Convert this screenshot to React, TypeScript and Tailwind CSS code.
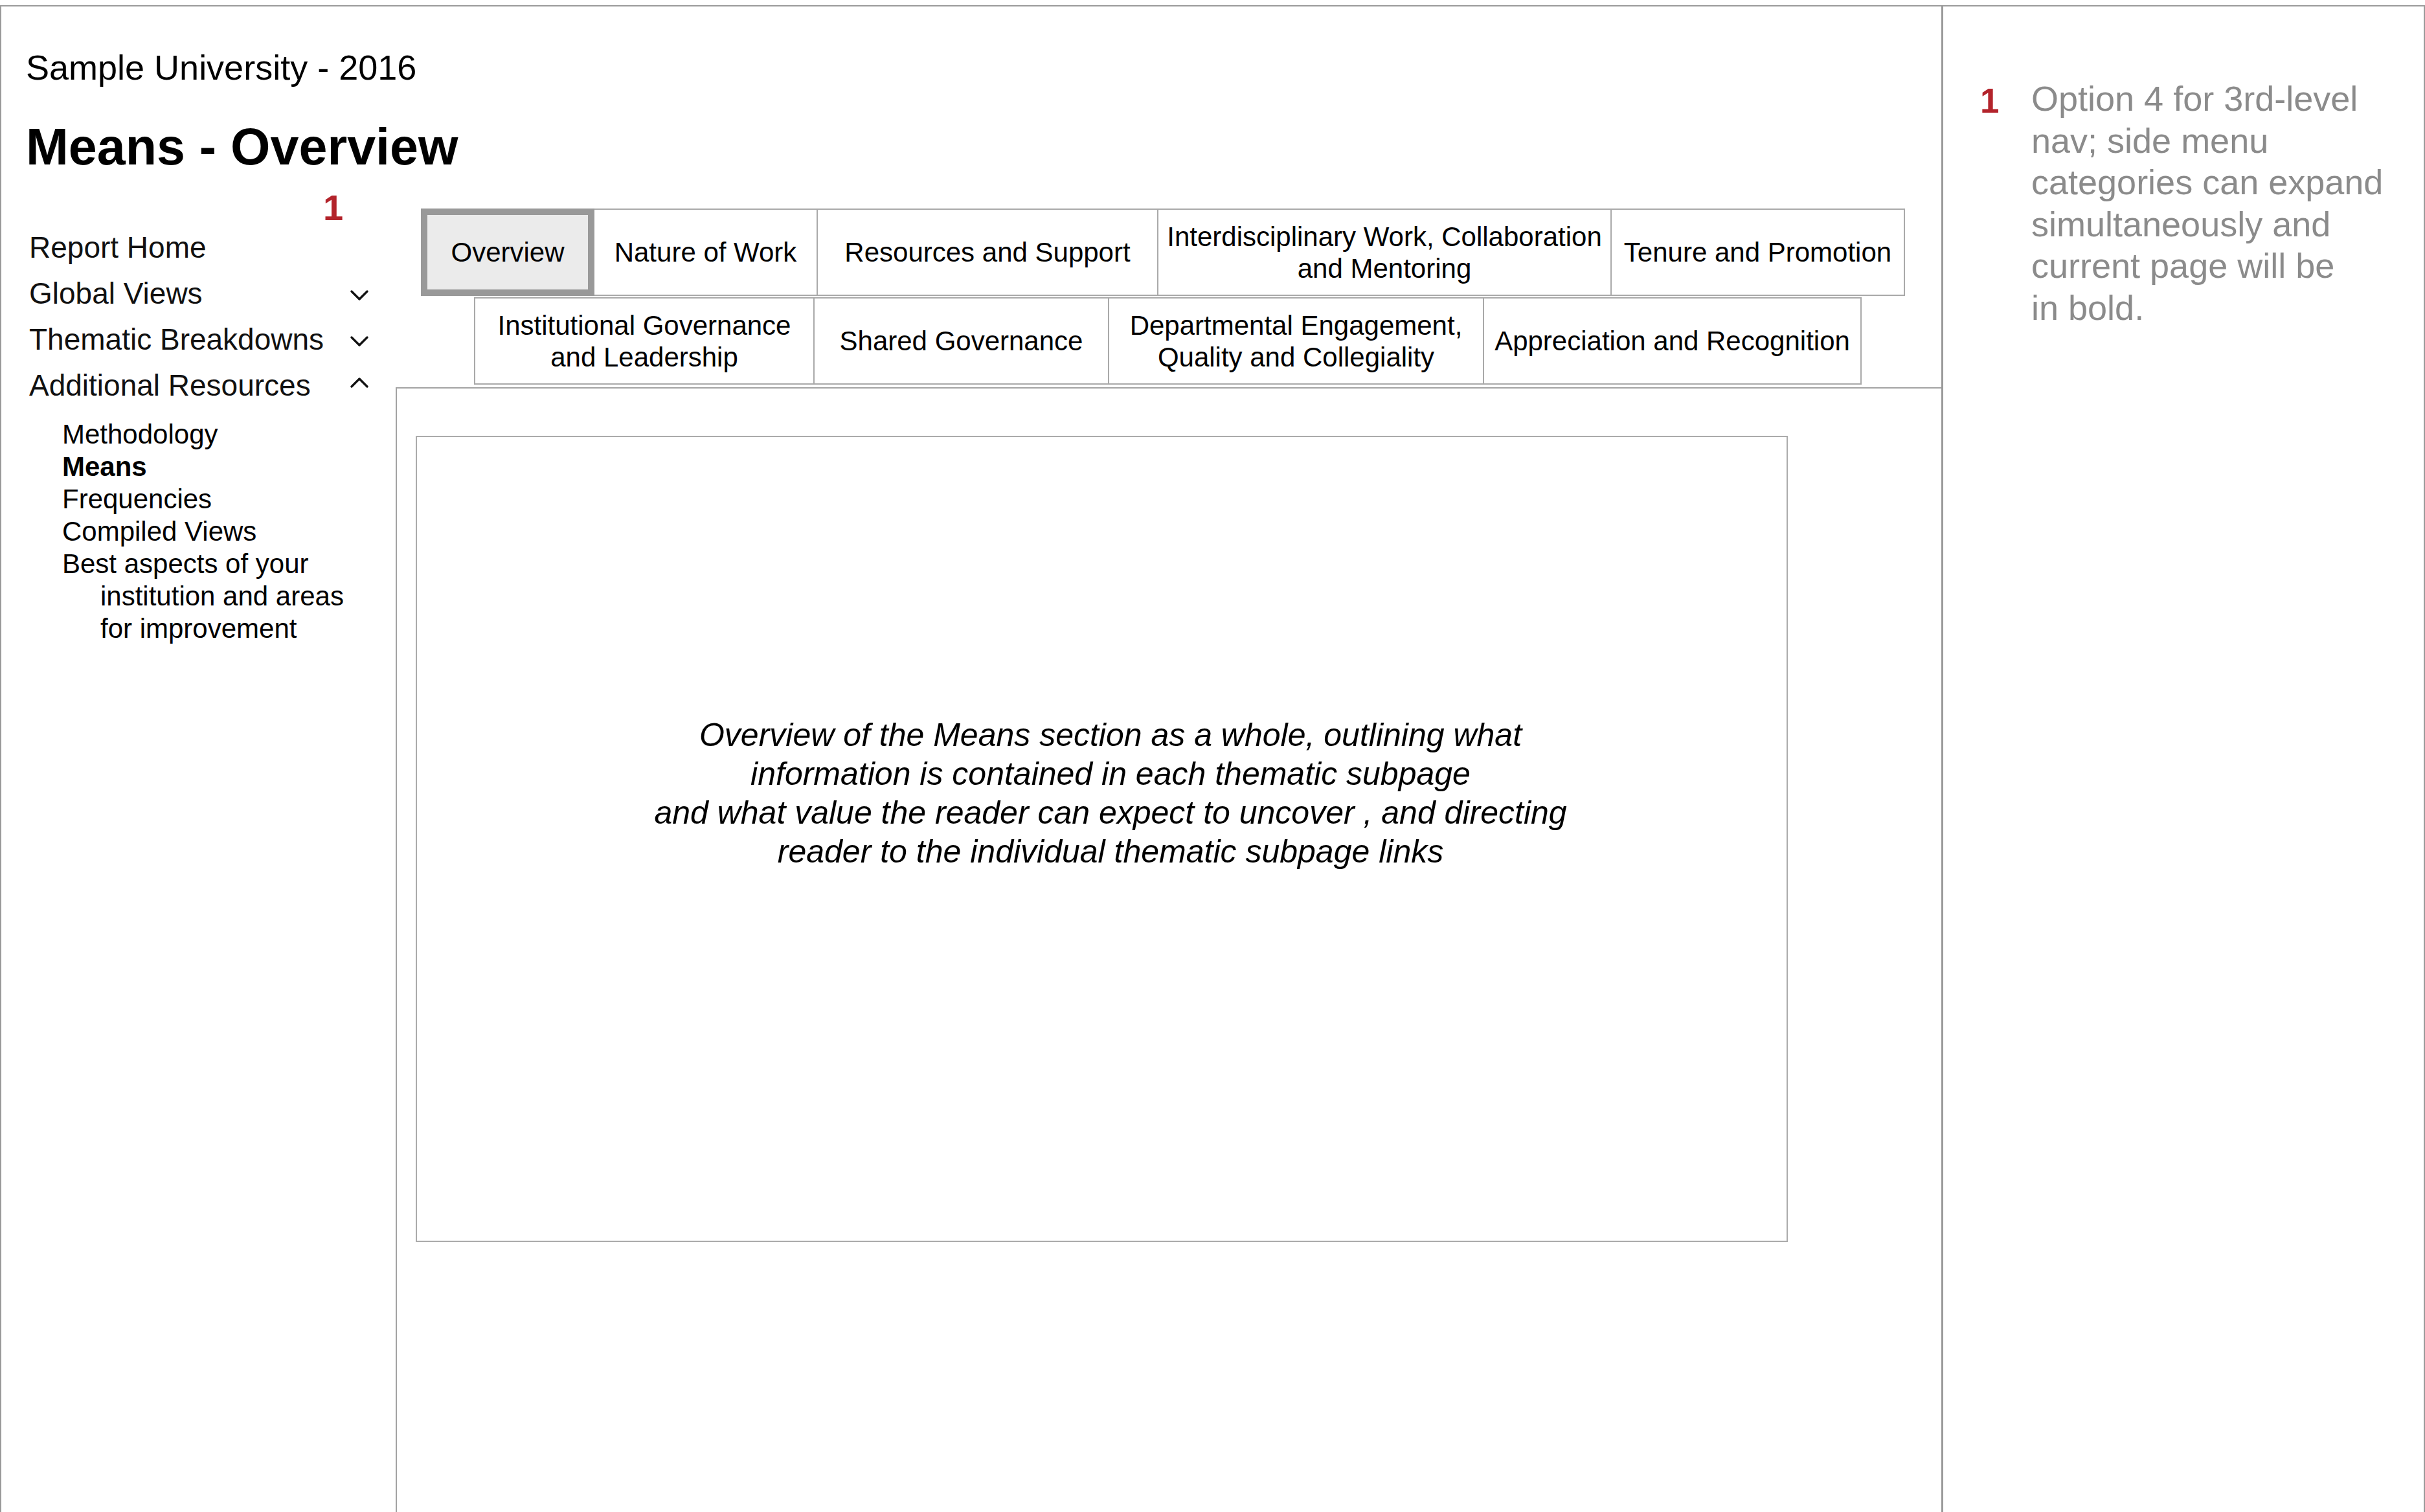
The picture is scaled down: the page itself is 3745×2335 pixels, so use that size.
import React from "react";

function Chevron({ up }: { up?: boolean }) {
  return (
    <svg
      width="28"
      height="17"
      viewBox="0 0 28 17"
      fill="none"
      stroke="#111"
      strokeWidth="3.3"
      strokeLinecap="round"
      strokeLinejoin="round"
      className={up ? "mb-[11px]" : "mt-[6px]"}
    >
      {up ? <path d="M2 15 L14 3 L26 15" /> : <path d="M2 2 L14 14 L26 2" />}
    </svg>
  );
}

function NavItem({ label, chevron }: { label: string; chevron?: "up" | "down" }) {
  return (
    <div className="ml-[43px] w-[524px] h-[71px] flex items-center justify-between text-[46px] leading-[71px] text-[#111] whitespace-nowrap">
      <span>{label}</span>
      {chevron ? <Chevron up={chevron === "up"} /> : null}
    </div>
  );
}

function Tab({
  children,
  width,
  first,
  active,
}: {
  children: React.ReactNode;
  width: string;
  first?: boolean;
  active?: boolean;
}) {
  const base =
    "h-[135px] flex items-center justify-center text-center text-[42px] leading-[49px] text-black whitespace-nowrap";
  if (active) {
    return (
      <div className={`${base} ${width} border-[10px] border-[#999999] bg-[#ebebeb]`}>
        {children}
      </div>
    );
  }
  return (
    <div
      className={`${base} ${width} border-t-2 border-b-2 border-r-2 border-[#a9a9a9] bg-white ${
        first ? "border-l-2" : ""
      }`}
    >
      {children}
    </div>
  );
}

export default function App() {
  return (
    <div className="w-[3745px] h-[2335px] bg-white overflow-hidden font-['Liberation_Sans',Arial,Helvetica,sans-serif]">
      <div className="mt-[8px] h-[2327px] flex border-t-2 border-l-2 border-r-2 border-[#9a9a9a]">
        {/* Main area */}
        <div className="w-[2999px] h-full flex flex-col border-r-[3px] border-[#9a9a9a]">
          {/* Header */}
          <div className="pl-[38px] pt-[62px]">
            <div className="text-[54px] leading-[64px] text-black whitespace-nowrap">
              Sample University - 2016
            </div>
            <div className="mt-[43px] text-[79px] leading-[96px] font-bold text-black whitespace-nowrap">
              Means - Overview
            </div>
          </div>

          {/* Body row */}
          <div className="flex flex-1">
            {/* Sidebar */}
            <div className="w-[609px] shrink-0 pt-[19px]">
              <div className="pl-[497px] h-[53px] text-[56px] leading-[53px] font-bold text-[#b3232b]">
                1
              </div>
              <NavItem label="Report Home" />
              <NavItem label="Global Views" chevron="down" />
              <NavItem label="Thematic Breakdowns" chevron="down" />
              <NavItem label="Additional Resources" chevron="up" />
              <div className="mt-[15px] pl-[94px] text-[42px] leading-[50px] text-black">
                <div>Methodology</div>
                <div className="font-bold">Means</div>
                <div>Frequencies</div>
                <div>Compiled Views</div>
                <div className="pl-[59px] -indent-[59px] whitespace-nowrap">
                  Best aspects of your
                  <br />
                  institution and areas
                  <br />
                  for improvement
                </div>
              </div>
            </div>

            {/* Content column */}
            <div className="flex-1 flex flex-col pt-[47px]">
              <div className="ml-[39px] flex items-start">
                <Tab width="w-[268px]" active>
                  Overview
                </Tab>
                <Tab width="w-[345px]">Nature of Work</Tab>
                <Tab width="w-[526px]">Resources and Support</Tab>
                <Tab width="w-[700px]">
                  Interdisciplinary Work, Collaboration
                  <br />
                  and Mentoring
                </Tab>
                <Tab width="w-[453px]">Tenure and Promotion</Tab>
              </div>
              <div className="ml-[121px] mt-[2px] flex items-start">
                <Tab width="w-[526px]" first>
                  Institutional Governance
                  <br />
                  and Leadership
                </Tab>
                <Tab width="w-[455px]">Shared Governance</Tab>
                <Tab width="w-[579px]">
                  Departmental Engagement,
                  <br />
                  Quality and Collegiality
                </Tab>
                <Tab width="w-[583px]">Appreciation and Recognition</Tab>
              </div>

              {/* Panel */}
              <div className="mt-[4px] flex-1 border-t-2 border-l-2 border-[#a3a3a3]">
                <div className="ml-[29px] mt-[73px] w-[2119px] h-[1245px] border-2 border-[#ababab]">
                  <div className="pt-[430px] pl-[27px] text-center text-[50px] leading-[60px] italic text-black whitespace-nowrap">
                    Overview of the Means section as a whole, outlining what
                    <br />
                    information is contained in each thematic subpage
                    <br />
                    and what value the reader can expect to uncover , and directing
                    <br />
                    reader to the individual thematic subpage links
                  </div>
                </div>
              </div>
            </div>
          </div>
        </div>

        {/* Notes panel */}
        <div className="flex-1 pt-[110px] pl-[57px]">
          <div className="flex items-start">
            <div className="w-[79px] shrink-0 mt-[4px] text-[53px] leading-[64.5px] font-bold text-[#b3232b]">
              1
            </div>
            <div className="text-[54px] leading-[64.5px] text-[#8b8b8b] whitespace-nowrap">
              Option 4 for 3rd-level
              <br />
              nav; side menu
              <br />
              categories can expand
              <br />
              simultaneously and
              <br />
              current page will be
              <br />
              in bold.
            </div>
          </div>
        </div>
      </div>
    </div>
  );
}
